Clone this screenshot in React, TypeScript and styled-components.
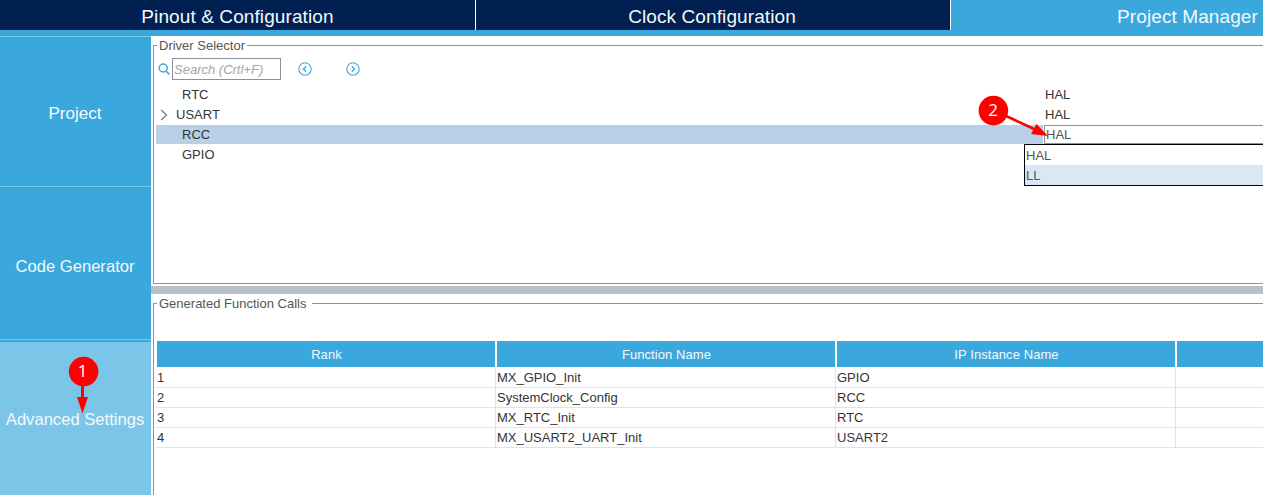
import React from "react";
import styled, { createGlobalStyle } from "styled-components";

const BLUE = "#3aa8dc";
const LINE = "#8e9095";

const GlobalStyle = createGlobalStyle`
  * { box-sizing: border-box; }
  body {
    margin: 0;
    background: #fff;
    overflow: hidden;
    font-family: "Liberation Sans", Arial, sans-serif;
    font-size: 13px;
    color: #333;
  }
`;

const Window = styled.div`
  position: relative;
  display: flex;
  flex-direction: column;
  width: 1263px;
  height: 495px;
  overflow: hidden;
`;

const TabBar = styled.nav`
  display: flex;
  flex: none;
  height: 36px;
  border-bottom: 6px solid ${BLUE};
`;

const Tab = styled.div<{ $active?: boolean }>`
  flex: none;
  width: ${(p) => (p.$active ? 476 : 475)}px;
  line-height: 34px;
  height: 30px;
  text-align: center;
  font-size: 19px;
  letter-spacing: 0.1px;
  white-space: nowrap;
  color: #f4f8fb;
  background: ${(p) => (p.$active ? BLUE : "#002052")};
  & + & { border-left: 1px solid #fff; padding-right: 2px; }
`;

const Main = styled.div`
  display: flex;
  flex: 1;
  min-height: 0;
`;

const Sidebar = styled.aside`
  display: flex;
  flex-direction: column;
  flex: none;
  width: 151px;
  background: ${BLUE};
  border-top: 1px solid #7bc5e8;
`;

const SideItem = styled.div<{ $active?: boolean; $height: number; $drop: number; $size?: number }>`
  flex: none;
  height: ${(p) => p.$height}px;
  padding-top: ${(p) => p.$drop}px;
  padding-right: 1px;
  display: flex;
  align-items: center;
  justify-content: center;
  font-size: ${(p) => p.$size ?? 16.6}px;
  white-space: nowrap;
  color: #f4fafd;
  background: ${(p) => (p.$active ? "#7bc5e9" : BLUE)};
  border-bottom: ${(p) => (p.$active ? 0 : 1)}px solid #7bc5e8;
  margin-top: ${(p) => (p.$active ? 2 : 0)}px;
`;

const Content = styled.main`
  flex: 1;
  min-width: 0;
  display: flex;
  flex-direction: column;
`;

const Group = styled.fieldset<{ $height: number }>`
  flex: none;
  min-width: 0;
  height: ${(p) => p.$height}px;
  margin: 0 -2px 0 2px;
  padding: 0 0 0 2px;
  border: 1px solid ${LINE};
`;

const Legend = styled.legend<{ $tail: number }>`
  margin-left: 1px;
  padding: 0 ${(p) => p.$tail}px 0 2px;
  height: 19px;
  line-height: 19px;
  color: #555;
`;

const Splitter = styled.div`
  flex: none;
  height: 8px;
  margin-top: 2px;
  background: #b7c2c8;
`;

const SearchBar = styled.div`
  display: flex;
  align-items: center;
  height: 30px;
  padding: 0 0 2px 2px;
`;

const SearchInput = styled.div`
  width: 109px;
  height: 22px;
  margin: 0 17px 0 2px;
  padding-left: 1px;
  border: 1px solid ${LINE};
  font-style: italic;
  line-height: 21px;
  color: #a6a6a6;
`;

const NavIcon = styled.svg`
  width: 14px;
  height: 14px;
  margin-right: 34px;
`;

const DriverRow = styled.div<{ $selected?: boolean }>`
  display: flex;
  height: 19px;
  margin-bottom: 1px;
  line-height: 19px;
  background: ${(p) => (p.$selected ? "#b8cfe5" : "transparent")};
`;

const Expander = styled.span<{ $leaf?: boolean }>`
  flex: none;
  display: flex;
  align-items: center;
  width: ${(p) => (p.$leaf ? 26 : 20)}px;
  padding-left: 4px;
`;

const DriverName = styled.span`
  flex: 1;
`;

const DriverValue = styled.span<{ $editing?: boolean }>`
  flex: none;
  width: 222px;
  height: 19px;
  padding-left: ${(p) => (p.$editing ? 1 : 3)}px;
  line-height: ${(p) => (p.$editing ? 17 : 19)}px;
  color: ${(p) => (p.$editing ? "#555" : "#333")};
  background: #fff;
  border: ${(p) => (p.$editing ? `1px solid ${LINE}` : "none")};
  box-shadow: ${(p) => (p.$editing ? "-1px 0 #fff" : "none")};
  margin-right: ${(p) => (p.$editing ? -2 : 0)}px;
`;

const Popup = styled.div`
  position: absolute;
  left: 1024px;
  top: 144px;
  width: 242px;
  border: 1px solid #000;
  background: #fff;
`;

const Option = styled.div<{ $hover?: boolean }>`
  height: 20px;
  padding-left: 1px;
  line-height: 21px;
  color: #555;
  background: ${(p) => (p.$hover ? "#d9e8f5" : "#fff")};
`;

const Table = styled.div`
  margin-top: 28px;
`;

const HeadRow = styled.div`
  display: grid;
  grid-template-columns: 338px 338px 338px 338px;
  column-gap: 2px;
  margin: 0 0 1px 1px;
`;

const HeadCell = styled.div`
  height: 26px;
  padding-left: 1px;
  line-height: 27px;
  text-align: center;
  letter-spacing: 0.08px;
  color: #f4fafd;
  background: ${BLUE};
`;

const Row = styled.div`
  display: grid;
  grid-template-columns: 340px 340px 340px 340px;
  height: 20px;
`;

const Cell = styled.div`
  padding-left: 1px;
  line-height: 19px;
  border-right: 1px solid #e2e2e5;
  border-bottom: 1px solid #e2e2e5;
`;

const Annotations = styled.svg`
  position: absolute;
  inset: 0;
  width: 1263px;
  height: 495px;
  pointer-events: none;
  font-family: "Open Sans", sans-serif;
  font-size: 17px;
`;

const drivers = [
  { name: "RTC" },
  { name: "USART", expandable: true },
  { name: "RCC", selected: true },
  { name: "GPIO" },
];

const calls = [
  ["MX_GPIO_Init", "GPIO"],
  ["SystemClock_Config", "RCC"],
  ["MX_RTC_Init", "RTC"],
  ["MX_USART2_UART_Init", "USART2"],
];

const CircleArrow = ({ d }: { d: string }) => (
  <NavIcon viewBox="0 0 14 14" fill="none" stroke="#3aa8dc">
    <circle cx="7" cy="7" r="6.2" strokeWidth="1.1" />
    <path d={d} strokeWidth="1.4" />
  </NavIcon>
);

export default function App() {
  return (
    <Window>
      <GlobalStyle />
      <TabBar>
        <Tab>Pinout &amp; Configuration</Tab>
        <Tab>Clock Configuration</Tab>
        <Tab $active>Project Manager</Tab>
      </TabBar>
      <Main>
        <Sidebar>
          <SideItem $height={150} $drop={4} $size={17}>Project</SideItem>
          <SideItem $height={153} $drop={7}>Code Generator</SideItem>
          <SideItem $height={153} $drop={3} $active>Advanced Settings</SideItem>
        </Sidebar>
        <Content>
          <Group $height={248}>
            <Legend $tail={2}>Driver Selector</Legend>
            <SearchBar>
              <svg width="12" height="12" viewBox="0 0 12 12" fill="none" stroke="#3aa8dc">
                <circle cx="5.2" cy="5" r="4" strokeWidth="1.5" />
                <path d="M8 8L11.3 11.3" strokeWidth="1.7" />
              </svg>
              <SearchInput>Search (Crtl+F)</SearchInput>
              <CircleArrow d="M8.2 4.3L5.5 7L8.2 9.7" />
              <CircleArrow d="M5.8 4.3L8.5 7L5.8 9.7" />
            </SearchBar>
            {drivers.map((d) => (
              <DriverRow key={d.name} $selected={d.selected}>
                <Expander $leaf={!d.expandable}>
                  {d.expandable && (
                    <svg width="8" height="12" viewBox="0 0 8 12" fill="none" stroke="#777">
                      <path d="M1.2 1L6.5 6L1.2 11" strokeWidth="1.2" />
                    </svg>
                  )}
                </Expander>
                <DriverName>{d.name}</DriverName>
                {d.name !== "GPIO" && <DriverValue $editing={d.selected}>HAL</DriverValue>}
              </DriverRow>
            ))}
          </Group>
          <Splitter />
          <Group $height={240}>
            <Legend $tail={6}>Generated Function Calls</Legend>
            <Table>
              <HeadRow>
                <HeadCell>Rank</HeadCell>
                <HeadCell>Function Name</HeadCell>
                <HeadCell>IP Instance Name</HeadCell>
                <HeadCell />
              </HeadRow>
              {calls.map(([fn, ip], i) => (
                <Row key={fn}>
                  <Cell>{i + 1}</Cell>
                  <Cell>{fn}</Cell>
                  <Cell>{ip}</Cell>
                  <Cell />
                </Row>
              ))}
            </Table>
          </Group>
        </Content>
      </Main>
      <Popup>
        <Option>HAL</Option>
        <Option $hover>LL</Option>
      </Popup>
      <Annotations viewBox="0 0 1263 495" fill="#f00" textAnchor="middle">
        <circle cx="83.6" cy="371.6" r="14.8" />
        <path d="M81 385H84V397H88L82.5 413.5L77 397H81Z" />
        <text x="82.6" y="377" fill="#fff">1</text>
        <circle cx="993.4" cy="110.6" r="14.8" />
        <path d="M1005 115.5L1034 129" stroke="#f00" strokeWidth="2.6" />
        <path d="M1036.5 124L1048 136L1031 134Z" />
        <text x="993" y="116" fill="#fff">2</text>
      </Annotations>
    </Window>
  );
}
